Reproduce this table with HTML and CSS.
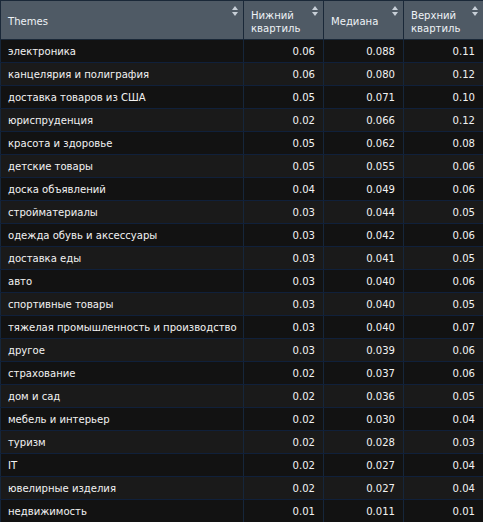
FILE: index.html
```html
<!DOCTYPE html>
<html>
<head>
<meta charset="utf-8">
<link rel="stylesheet" href="styles.css">
</head>
<body>
<table class="grid">
<colgroup><col class="c-theme"><col class="c-num"><col class="c-num"><col class="c-num"></colgroup>
<thead>
<tr>
<th><span class="h-label">Themes</span><span class="sort"></span></th>
<th><span class="h-label">Нижний<br>квартиль</span><span class="sort"></span></th>
<th><span class="h-label">Медиана</span><span class="sort"></span></th>
<th><span class="h-label">Верхний<br>квартиль</span><span class="sort"></span></th>
</tr>
</thead>
<tbody>
<tr><td>электроника</td><td>0.06</td><td>0.088</td><td>0.11</td></tr>
<tr><td>канцелярия и полиграфия</td><td>0.06</td><td>0.080</td><td>0.12</td></tr>
<tr><td>доставка товаров из США</td><td>0.05</td><td>0.071</td><td>0.10</td></tr>
<tr><td>юриспруденция</td><td>0.02</td><td>0.066</td><td>0.12</td></tr>
<tr><td>красота и здоровье</td><td>0.05</td><td>0.062</td><td>0.08</td></tr>
<tr><td>детские товары</td><td>0.05</td><td>0.055</td><td>0.06</td></tr>
<tr><td>доска объявлений</td><td>0.04</td><td>0.049</td><td>0.06</td></tr>
<tr><td>стройматериалы</td><td>0.03</td><td>0.044</td><td>0.05</td></tr>
<tr><td>одежда обувь и аксессуары</td><td>0.03</td><td>0.042</td><td>0.06</td></tr>
<tr><td>доставка еды</td><td>0.03</td><td>0.041</td><td>0.05</td></tr>
<tr><td>авто</td><td>0.03</td><td>0.040</td><td>0.06</td></tr>
<tr><td>спортивные товары</td><td>0.03</td><td>0.040</td><td>0.05</td></tr>
<tr><td>тяжелая промышленность и производство</td><td>0.03</td><td>0.040</td><td>0.07</td></tr>
<tr><td>другое</td><td>0.03</td><td>0.039</td><td>0.06</td></tr>
<tr><td>страхование</td><td>0.02</td><td>0.037</td><td>0.06</td></tr>
<tr><td>дом и сад</td><td>0.02</td><td>0.036</td><td>0.05</td></tr>
<tr><td>мебель и интерьер</td><td>0.02</td><td>0.030</td><td>0.04</td></tr>
<tr><td>туризм</td><td>0.02</td><td>0.028</td><td>0.03</td></tr>
<tr><td>IT</td><td>0.02</td><td>0.027</td><td>0.04</td></tr>
<tr><td>ювелирные изделия</td><td>0.02</td><td>0.027</td><td>0.04</td></tr>
<tr><td>недвижимость</td><td>0.01</td><td>0.011</td><td>0.01</td></tr>
</tbody>
</table>
</body>
</html>
```
FILE: styles.css
```css
html, body {
  margin: 0;
  padding: 0;
  background: #141414;
}
body {
  font-family: "DejaVu Sans Condensed", "DejaVu Sans", sans-serif;
  font-size: 11.2px;
  color: #f2f2f2;
}
.grid {
  border-collapse: collapse;
  width: 483px;
  table-layout: fixed;
  border-top: 1px solid #1a2838;
}
.c-theme { width: 243px; }
.c-num { width: 80px; }
th {
  background: #4f5a65;
  color: #eef2f6;
  font-weight: normal;
  text-align: left;
  height: 35px;
  padding: 3px 16px 0 7px;
  border: 1px solid #1a2838;
  border-top: none;
  position: relative;
  line-height: 13px;
  vertical-align: middle;
}
th .sort {
  position: absolute;
  right: 4px;
  top: 5px;
  width: 7px;
  height: 10px;
}
th .sort::before, th .sort::after {
  content: "";
  position: absolute;
  left: 0;
  border-left: 3.5px solid transparent;
  border-right: 3.5px solid transparent;
}
th .sort::before {
  top: 0;
  border-bottom: 4px solid #c8d0d8;
}
th .sort::after {
  top: 6px;
  border-top: 4px solid #c8d0d8;
}
td {
  height: 22px;
  padding: 0 8px 0 7px;
  border: 1px solid #10203a;
  border-left-color: #16263a;
  border-right-color: #16263a;
  text-align: right;
  white-space: nowrap;
  overflow: hidden;
}
td:first-child {
  text-align: left;
}
tbody tr:nth-child(odd) td { background: #121212; }
tbody tr:nth-child(even) td { background: #1a1a1a; }
```
